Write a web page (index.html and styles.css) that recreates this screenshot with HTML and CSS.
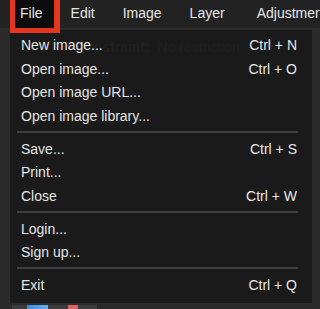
FILE: index.html
```html
<!DOCTYPE html>
<html lang="en">
<head>
    <meta charset="UTF-8">
    <meta name="viewport" content="width=device-width, initial-scale=1.0">
    <title>Photo Editor</title>
    <link rel="stylesheet" href="styles.css">
</head>
<body>
    <header class="menubar">
        <span class="menubar-item is-active">File</span>
        <span class="menubar-item">Edit</span>
        <span class="menubar-item">Image</span>
        <span class="menubar-item">Layer</span>
        <span class="menubar-item">Adjustments</span>
    </header>
    <main class="workspace">
        <div class="toolbar">
            <b class="toolbar-label">Constraint:</b>
            <span class="toolbar-value">No restriction</span>
        </div>
        <div class="swatches">
            <span class="swatch swatch-blue"></span>
            <span class="swatch swatch-red"></span>
        </div>
    </main>
    <ul class="dropdown">
        <li class="dropdown-item"><span>New image...</span><span class="shortcut">Ctrl + N</span></li>
        <li class="dropdown-item"><span>Open image...</span><span class="shortcut">Ctrl + O</span></li>
        <li class="dropdown-item"><span>Open image URL...</span></li>
        <li class="dropdown-item"><span>Open image library...</span></li>
        <li class="dropdown-sep"></li>
        <li class="dropdown-item"><span>Save...</span><span class="shortcut">Ctrl + S</span></li>
        <li class="dropdown-item"><span>Print...</span></li>
        <li class="dropdown-item"><span>Close</span><span class="shortcut">Ctrl + W</span></li>
        <li class="dropdown-sep"></li>
        <li class="dropdown-item"><span>Login...</span></li>
        <li class="dropdown-item"><span>Sign up...</span></li>
        <li class="dropdown-sep"></li>
        <li class="dropdown-item"><span>Exit</span><span class="shortcut">Ctrl + Q</span></li>
    </ul>
</body>
</html>
```

FILE: styles.css
```css
body {
    margin: 0;
    height: 309px;
    overflow: hidden;
    background-color: #2a2a2a;
    font-family: "Liberation Sans", Arial, sans-serif;
    font-size: 14px;
    color: #e4e4e4;
}

.menubar {
    position: relative;
    z-index: 2;
    display: flex;
    align-items: flex-start;
    height: 29px;
    padding-left: 10px;
    background-color: #222;
    border-bottom: 1px solid #2e2e2e;
    box-sizing: border-box;
    line-height: 27px;
    white-space: nowrap;
}

.menubar-item {
    padding: 0 14px;
    color: #e6e6e6;
}

.menubar-item.is-active {
    margin-right: -3px;
    padding: 0 11px 0 5px;
    height: 28px;
    background-color: #0c0c0c;
    border: 5px solid #e3361d;
    border-top: 0;
    border-right-width: 6px;
}

.menubar-item:last-child {
    padding-left: 18px;
}

.workspace {
    display: flex;
    flex-direction: column;
    height: 280px;
}

.toolbar {
    margin-top: 10px;
    padding-left: 75px;
    line-height: 16px;
    white-space: nowrap;
}

.toolbar-label {
    color: #5e5e5e;
}

.toolbar-value {
    margin-left: 4px;
    color: #555;
}

.swatches {
    display: flex;
    margin: auto 0 0 12px;
    width: 85px;
    height: 4px;
    background-color: #3b3b3b;
}

.swatch {
    height: 4px;
}

.swatch-blue {
    margin-left: 15px;
    width: 21px;
    background: linear-gradient(90deg, #3b8fe0, #6ab0f0);
}

.swatch-red {
    margin-left: 20px;
    width: 10px;
    background-color: #e06464;
}

.dropdown {
    position: absolute;
    top: 30px;
    left: 10px;
    z-index: 1;
    width: 302px;
    margin: 0;
    padding: 3.5px 15px 5.5px 11px;
    box-sizing: border-box;
    list-style: none;
    background-color: rgba(24, 24, 24, 0.9);
}

.dropdown-item {
    display: flex;
    justify-content: space-between;
    align-items: center;
    height: 23.5px;
    white-space: nowrap;
}

.shortcut {
    color: #e8e8e8;
}

.dropdown-sep {
    height: 2px;
    margin: 3px -1px 4.5px -4px;
    background-color: #3e3e3e;
}
```
